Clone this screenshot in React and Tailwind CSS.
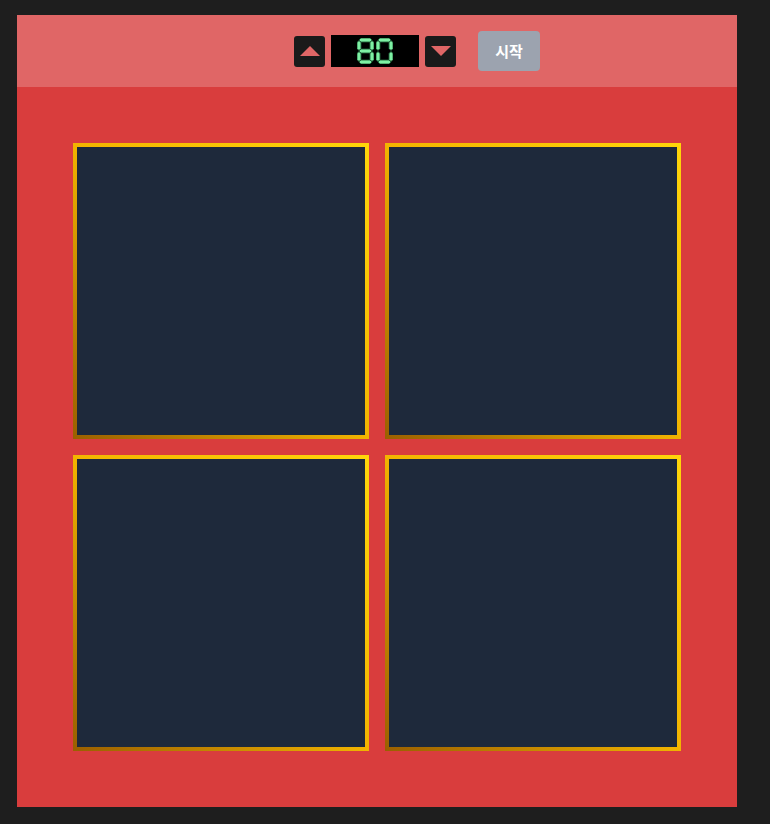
import React from "react";

// segments: a top, b top-right, c bottom-right, d bottom, e bottom-left, f top-left, g middle
const DIGITS = {
  0: "abcdef",
  1: "bc",
  2: "abged",
  3: "abgcd",
  4: "fgbc",
  5: "afgcd",
  6: "afgedc",
  7: "abc",
  8: "abcdefg",
  9: "abcdfg",
};

function Segment({ id }) {
  const w = 17;
  const h = 26;
  const t = 4;
  const m = h / 2;
  const e = 2;
  const horiz = (y) =>
    `${e},${y} ${e + t / 2},${y - t / 2} ${w - e - t / 2},${y - t / 2} ${w - e},${y} ${w - e - t / 2},${y + t / 2} ${e + t / 2},${y + t / 2}`;
  const vert = (x, y1, y2) =>
    `${x},${y1} ${x + t / 2},${y1 + t / 2} ${x + t / 2},${y2 - t / 2} ${x},${y2} ${x - t / 2},${y2 - t / 2} ${x - t / 2},${y1 + t / 2}`;
  const pts = {
    a: horiz(2),
    g: horiz(m),
    d: horiz(h - 2),
    f: vert(2, 2.5, m - 0.5),
    b: vert(w - 2, 2.5, m - 0.5),
    e: vert(2, m + 0.5, h - 2.5),
    c: vert(w - 2, m + 0.5, h - 2.5),
  }[id];
  return (
    <polygon points={pts} fill="#7ef0a4" stroke="#1d5e36" strokeWidth="0.9" />
  );
}

function Digit({ value }) {
  return (
    <svg width="17" height="26" viewBox="0 0 17 26">
      {DIGITS[value].split("").map((s) => (
        <Segment key={s} id={s} />
      ))}
    </svg>
  );
}

function Pad() {
  return (
    <div className="w-[296px] h-[296px] p-1 bg-gradient-to-tr from-[#9a5f00] via-[#f2b400] to-[#ffd60a]">
      <div className="w-full h-full bg-[#1e293b]" />
    </div>
  );
}

export default function App() {
  const bpm = "80";
  return (
    <div className="min-h-screen w-full bg-[#1e1e1e] pt-[15px] pl-[17px]">
      <div className="w-[720px] h-[792px] flex flex-col bg-[#d93d3d]">
        <header className="h-[72px] bg-[#e06666] flex items-center justify-center pl-[80px]">
          <div className="flex items-center gap-[6px]">
            <button className="w-[31px] h-[31px] rounded-[3px] bg-[#1a1a1a] flex items-center justify-center">
              <svg width="20" height="10" viewBox="0 0 20 10">
                <polygon points="10,0 20,10 0,10" fill="#e06666" />
              </svg>
            </button>
            <div className="w-[88px] h-[32px] bg-black flex items-center justify-center gap-[2px]">
              {bpm.split("").map((d, i) => (
                <Digit key={i} value={d} />
              ))}
            </div>
            <button className="w-[31px] h-[31px] rounded-[3px] bg-[#1a1a1a] flex items-center justify-center">
              <svg width="20" height="10" viewBox="0 0 20 10">
                <polygon points="0,0 20,0 10,10" fill="#e06666" />
              </svg>
            </button>
          </div>
          <button className="ml-[22px] w-[62px] h-[40px] rounded-[4px] bg-[#9ca3af] text-white font-bold text-[15px] font-['Noto_Sans_CJK_KR',sans-serif]">
            시작
          </button>
        </header>
        <main className="flex-1 flex items-center justify-center">
          <div className="grid grid-cols-2 gap-4">
            <Pad />
            <Pad />
            <Pad />
            <Pad />
          </div>
        </main>
      </div>
    </div>
  );
}
